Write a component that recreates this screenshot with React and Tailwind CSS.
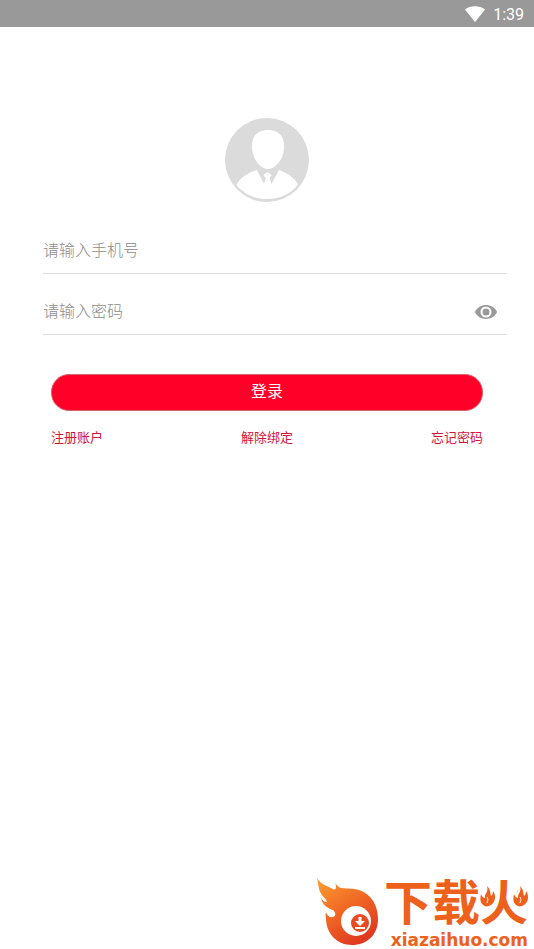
import { useState } from 'react';

function StatusBar() {
  return (
    <header className="flex h-[27px] items-center justify-end gap-2 bg-[#999999] pr-[10px] text-white">
      <svg width="20" height="16" viewBox="0 0 20 16" aria-hidden="true">
        <path d="M0 3.6C5.5-.8 14.500-.8 20 3.600L10 16Z" fill="currentColor" />
      </svg>
      <span className="pt-px font-['Roboto',sans-serif] text-base leading-[27px]">1:39</span>
    </header>
  );
}

function Avatar() {
  return (
    <svg className="mx-auto block" width="84" height="84" viewBox="0 0 84 84" aria-hidden="true">
      <circle cx="42" cy="42" r="42" fill="#dbdbdb" />
      <path
        d="M11.500 67C15.500 59 24 54.500 32 52L39 66L41 59.500L38.500 57L42.500 54L46.500 57L44.500 59.500L46.500 66L54 52C62 55 69 59 73 66.500C66 76 54.500 81 42.500 81C30 81 18.500 76 11.500 67Z"
        fill="#fff"
      />
      <path
        d="M43 12C53 12 59 17 59 29C59 41 50.500 51 43 51C35.500 51 27 41 27 29C27 17 33 12 43 12Z"
        fill="#fff"
      />
      <path d="M42.500 54L46.500 57.500L44 60L46 67H39.500L41 60L38.500 57.500Z" fill="#fff" />
    </svg>
  );
}

function EyeIcon() {
  return (
    <svg className="mt-px" width="22" height="14" viewBox="0 0 22 14" aria-hidden="true">
      <path d="M0 7C4-2.300 18-2.300 22 7C18 16.300 4 16.300 0 7Z" fill="#999" />
      <circle cx="11" cy="7" r="4.500" fill="#999" stroke="#fff" strokeWidth="2" />
    </svg>
  );
}

function Flame({ className }) {
  return (
    <svg className={className} width="18" height="24" viewBox="-2 -2 18 24" aria-hidden="true">
      <path
        d="M6 0C10 4 9 7 10 10C11.500 9 12 7 12 5C16 10 14 18 8 20C5 21 3 20 1 18C-1 16-1 12 0 8C1 11 3 12 4 12C3 8 8 6 6 0Z"
        fill="#ee611c"
        stroke="#fff"
        strokeWidth="4"
        paintOrder="stroke"
      />
      <path d="M6 11C8 14 6 15 6 17" fill="none" stroke="#fff" />
    </svg>
  );
}

function LogoMark() {
  return (
    <svg width="62" height="67" viewBox="0 0 62 67" aria-hidden="true">
      <defs>
        <linearGradient id="flame" x1="0" y1="0" x2="0.600" y2="1">
          <stop offset="0" stopColor="#f9a032" />
          <stop offset="0.500" stopColor="#f26a25" />
          <stop offset="1" stopColor="#df3a20" />
        </linearGradient>
      </defs>
      <path
        d="M0 0C4 7 11 8 16 11C19 13 20 9 18 4C20 8 22 10 25 10C31 11 36 10 42 12C54 16 61 27 61 41C61 57 50 67 35 67C20 67 10 56 9 42C9 39 8 37 9 34C10 38 13 40 16 39C19 38 19 35 16 32C10 30 5 27 4 19C5 22 7 24 10 24C9 20 4 18 2 11C1 7 1 3 0 0Z"
        fill="url(#flame)"
      />
      <circle cx="39" cy="43" r="15" fill="#fff" />
      <circle cx="43" cy="45" r="9" fill="#e74b23" />
      <path d="M41.500 39H44.500V43H48L43 48L38 43H41.500ZM38 49H48V51H38Z" fill="#fff" />
    </svg>
  );
}

function Watermark() {
  return (
    <div className="absolute right-[6px] bottom-0 flex items-end text-[#ee611c]">
      <div className="pb-1">
        <LogoMark />
      </div>
      <div className="flex flex-col items-end pl-[5px]">
        <div className="relative pb-2 font-['Noto_Sans_CJK_SC',sans-serif] text-[48px] leading-[48px] font-bold">
          下载火
          <Flame className="absolute top-[9px] right-[31px]" />
          <Flame className="absolute top-[9px] -right-[2px]" />
        </div>
        <div className="font-['DejaVu_Sans',sans-serif] text-[17px] leading-[18px] font-bold">xiazaihuo.com</div>
      </div>
    </div>
  );
}

export default function App() {
  const [showPassword, setShowPassword] = useState(false);

  return (
    <div className="relative flex min-h-screen flex-col bg-white font-['Noto_Sans_CJK_SC',sans-serif]">
      <StatusBar />
      <main className="pt-[91px]">
        <Avatar />
        <form className="mt-[25px]" onSubmit={(e) => e.preventDefault()}>
          {/* Campos */}
          <div className="mr-[27px] ml-[43px]">
            <div className="flex h-[47px] items-center border-b border-[#dddddd]">
              <input
                type="tel"
                aria-label="手机号"
                placeholder="请输入手机号"
                className="w-full pb-[2px] text-base font-light outline-none placeholder:text-[#8c8c8c]"
              />
            </div>
            <div className="mt-[14px] flex h-[47px] items-center border-b border-[#dddddd] pr-[10px]">
              <input
                type={showPassword ? 'text' : 'password'}
                aria-label="密码"
                placeholder="请输入密码"
                className="min-w-0 flex-1 pb-[2px] text-base font-light outline-none placeholder:text-[#8c8c8c]"
              />
              <button type="button" aria-label="显示密码" onClick={() => setShowPassword(!showPassword)}>
                <EyeIcon />
              </button>
            </div>
          </div>

          <div className="mx-[51px] mt-[39px]">
            <button
              type="submit"
              className="flex h-[37px] w-full items-center justify-center rounded-[18px] border border-[#d9656f] bg-[#ff0029] pb-[5px] text-base text-white"
            >
              登录
            </button>
            <nav className="mt-4 flex justify-between text-[13px] leading-5 text-[#d3143a]">
              <a href="#registro">注册账户</a>
              <a href="#desvincular">解除绑定</a>
              <a href="#recuperar">忘记密码</a>
            </nav>
          </div>
        </form>
      </main>
      <Watermark />
    </div>
  );
}
